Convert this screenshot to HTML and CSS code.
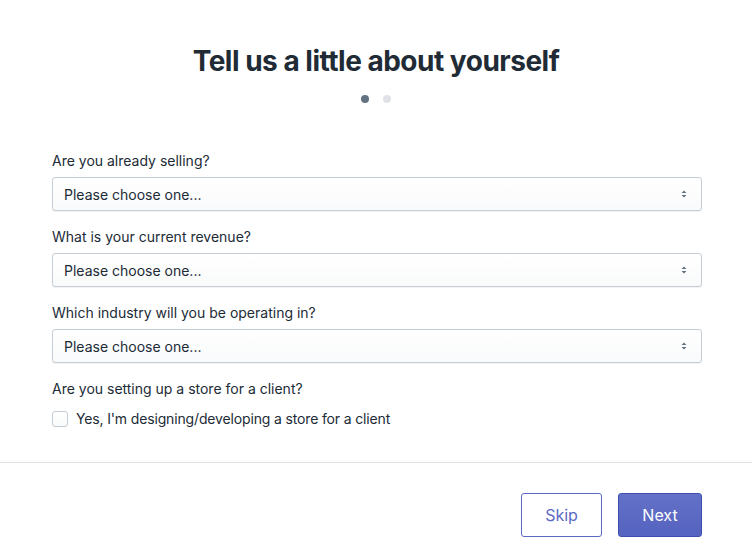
FILE: index.html
```html
<!DOCTYPE html>
<html lang="en">
<head>
    <meta charset="UTF-8">
    <meta name="viewport" content="width=device-width, initial-scale=1.0">
    <title>Tell us a little about yourself</title>
    <link rel="stylesheet" href="styles.css">
</head>
<body>
    <div class="card">
        <div class="header">
            <h1>Tell us a little about yourself</h1>
            <div class="dots">
                <span class="dot active"></span>
                <span class="dot"></span>
            </div>
        </div>

        <form class="form">
            <div class="field">
                <label>Are you already selling?</label>
                <div class="select">
                    <span>Please choose one...</span>
                    <svg class="arrows" width="8" height="10" viewBox="0 0 8 10"><path d="M4 1.5L6.5 4h-5z M4 8.5L1.5 6h5z" fill="#637381"/></svg>
                </div>
            </div>
            <div class="field">
                <label>What is your current revenue?</label>
                <div class="select">
                    <span>Please choose one...</span>
                    <svg class="arrows" width="8" height="10" viewBox="0 0 8 10"><path d="M4 1.5L6.5 4h-5z M4 8.5L1.5 6h5z" fill="#637381"/></svg>
                </div>
            </div>
            <div class="field">
                <label>Which industry will you be operating in?</label>
                <div class="select">
                    <span>Please choose one...</span>
                    <svg class="arrows" width="8" height="10" viewBox="0 0 8 10"><path d="M4 1.5L6.5 4h-5z M4 8.5L1.5 6h5z" fill="#637381"/></svg>
                </div>
            </div>
            <div class="field">
                <label>Are you setting up a store for a client?</label>
                <div class="check">
                    <span class="box"></span>
                    <span>Yes, I'm designing/developing a store for a client</span>
                </div>
            </div>
        </form>

        <div class="footer">
            <button type="button" class="btn">Skip</button>
            <button type="button" class="btn primary">Next</button>
        </div>
    </div>
</body>
</html>
```

FILE: styles.css
```css
body {
    margin: 0;
    font-family: Inter, "Liberation Sans", Arial, sans-serif;
    color: #212b36;
    background: #fff;
}

.card {
    width: 752px;
}

.header {
    text-align: center;
    padding-top: 43px;
}

h1 {
    margin: 0;
    font-size: 28px;
    line-height: 36px;
    font-weight: 700;
    letter-spacing: -0.5px;
}

.dots {
    display: flex;
    justify-content: center;
    gap: 14px;
    margin-top: 16px;
}

.dot {
    width: 8px;
    height: 8px;
    border-radius: 50%;
    background: #dfe3e8;
}

.dot.active {
    background: #637381;
}

.form {
    box-sizing: border-box;
    height: 359px;
    padding: 48px 50px 0 52px;
}

.field {
    margin-bottom: 16px;
}

.field label {
    display: block;
    font-size: 14px;
    line-height: 20px;
    margin-bottom: 6px;
}

.select {
    display: flex;
    align-items: center;
    justify-content: space-between;
    height: 34px;
    box-sizing: border-box;
    padding: 0 13px 0 11px;
    border: 1px solid #c4cdd5;
    border-radius: 3px;
    background: linear-gradient(#fff, #f9fafb);
    box-shadow: 0 1px 0 rgba(22, 29, 37, 0.05);
    font-size: 14px;
}

.check {
    display: flex;
    align-items: center;
    gap: 8px;
    font-size: 14px;
    line-height: 20px;
    margin-top: 10px;
    letter-spacing: -0.15px;
}

.box {
    width: 16px;
    height: 16px;
    box-sizing: border-box;
    border: 1px solid #c4cdd5;
    border-radius: 3px;
    background: linear-gradient(#fff, #f9fafb);
}

.footer {
    border-top: 1px solid #dfe3e8;
    display: flex;
    justify-content: flex-end;
    gap: 16px;
    padding: 30px 50px 0 0;
}

.btn {
    height: 44px;
    width: 81px;
    padding: 0;
    font-family: inherit;
    font-size: 16px;
    border-radius: 3px;
    border: 1px solid #5c6ac4;
    background: #fff;
    color: #5c6ac4;
}

.btn.primary {
    width: 84px;
    border-color: #3f4eae;
    background: linear-gradient(#6371c7, #5563c1);
    color: #fff;
}
```
